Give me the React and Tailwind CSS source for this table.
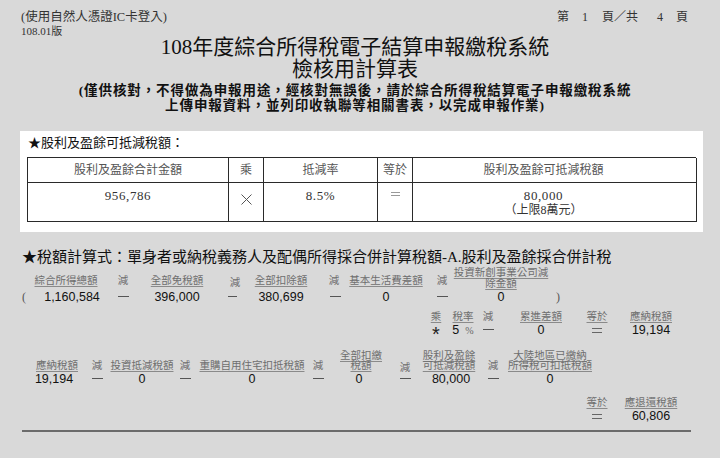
import React from 'react';

const SERIF = "font-['Liberation_Serif','Noto_Sans_CJK_TC',serif]";
const SANS = "font-['Liberation_Sans','Noto_Sans_CJK_TC',sans-serif]";

const Dash = () => <span className="block mt-[7px] h-px w-[11px] bg-[#555]" />;

const Eq = () => (
    <svg width="10" height="5" viewBox="0 0 10 5" className="mt-[6px]">
        <line x1="0" y1="0.5" x2="10" y2="0.5" stroke="#666" strokeWidth="1" />
        <line x1="0" y1="4.5" x2="10" y2="4.5" stroke="#666" strokeWidth="1" />
    </svg>
);

const Paren = ({ children }) => (
    <span className={`${SERIF} text-[12px] text-[#555]`}>{children}</span>
);

const Rate = () => (
    <span className="flex items-baseline">
        <span>5</span>
        <span className={`${SERIF} ml-[6px] text-[10px] text-[#666]`}>%</span>
    </span>
);

const Star = () => (
    <span className={`${SANS} block text-[20px] leading-[16px] mt-[4px] text-[#222]`}>*</span>
);

// one label above one value, both centred in a fixed width box
const Cell = ({ c, l, v, plain, lc = "", vc = "", labelBox, lead }) => {
    const lines = Array.isArray(l) ? l : l ? [l] : [];
    return (
        <div className={`flex flex-col items-center shrink-0 ${c}`}>
            <div className={`flex flex-col justify-end items-center ${labelBox}`}>
                <div className={`${SERIF} text-[10.5px] ${lead} text-[#6e6e6e] whitespace-nowrap text-center ${lc}`}>
                    {lines.map((t, i) => (
                        <div key={i} className={plain ? "" : "underline decoration-[#8a8a8a] underline-offset-[1.5px]"}>{t}</div>
                    ))}
                </div>
            </div>
            <div className={`flex justify-center w-full h-[16px] ${SANS} text-[12.5px] leading-[16px] text-[#111] ${vc}`}>
                {v}
            </div>
        </div>
    );
};

const row1 = [
    { c: "ml-[18px] w-[12px]", v: <Paren>(</Paren> },
    { c: "w-[72px]", l: "綜合所得總額", v: "1,160,584", vc: "pl-[12px]", lc: "mb-[3px]" },
    { c: "ml-[14px] w-[14px]", l: "減", plain: true, v: <Dash />, lc: "mb-[3px]" },
    { c: "ml-[19px] w-[56px]", l: "全部免稅額", v: "396,000", lc: "mb-[3px]" },
    { c: "ml-[23px] w-[14px]", l: "減", plain: true, v: <Dash />, lc: "mb-[1px]", vc: "pr-[5px]" },
    { c: "ml-[11px] w-[56px]", l: "全部扣除額", v: "380,699", lc: "mb-[3px]" },
    { c: "ml-[18px] w-[14px]", l: "減", plain: true, v: <Dash />, lc: "mb-[3px]", vc: "pl-[3px]" },
    { c: "ml-[7px] w-[76px]", l: "基本生活費差額", v: "0", lc: "mb-[3px]" },
    { c: "ml-[11px] w-[14px]", l: "減", plain: true, v: <Dash />, lc: "mb-[3px]" },
    { c: "ml-[3px] w-[98px]", l: ["投資新創事業公司減", "除金額"], v: "0" },
    { c: "ml-[2px] w-[12px]", v: <Paren>)</Paren> },
];

const row2 = [
    { c: "ml-[428px] w-[16px]", l: "乘", v: <Star /> },
    { c: "ml-[8px] w-[22px]", l: "稅率", v: <Rate /> },
    { c: "ml-[6px] w-[16px]", l: "減", plain: true, v: <Dash /> },
    { c: "ml-[20px] w-[50px]", l: "累進差額", v: "0" },
    { c: "ml-[18px] w-[26px]", l: "等於", v: <Eq /> },
    { c: "ml-[14px] w-[54px]", l: "應納稅額", v: "19,194" },
];

const row3 = [
    { c: "ml-[30px] w-[54px]", l: "應納稅額", v: "19,194", vc: "pr-[6px]" },
    { c: "ml-[5px] w-[16px]", l: "減", plain: true, v: <Dash /> },
    { c: "ml-[3px] w-[68px]", l: "投資抵減稅額", v: "0" },
    { c: "ml-[1px] w-[16px]", l: "減", plain: true, v: <Dash /> },
    { c: "ml-[3px] w-[112px]", l: "重購自用住宅扣抵稅額", v: "0" },
    { c: "ml-[2px] w-[16px]", l: "減", plain: true, v: <Dash /> },
    { c: "ml-[8px] w-[54px]", l: ["全部扣繳", "稅額"], v: "0", vc: "pr-[4px]" },
    { c: "ml-[9px] w-[16px]", l: "減", plain: true, v: <Dash />, lc: "-mb-[2px]" },
    { c: "ml-[6px] w-[60px]", l: ["股利及盈餘", "可抵減稅額"], v: "80,000", vc: "pl-[4px]" },
    { c: "ml-[6px] w-[16px]", l: "減", plain: true, v: <Dash /> },
    { c: "ml-[3px] w-[92px]", l: ["大陸地區已繳納", "所得稅可扣抵稅額"], v: "0" },
];

const row4 = [
    { c: "ml-[584px] w-[26px]", l: "等於", v: <Eq /> },
    { c: "ml-[12px] w-[58px]", l: "應退還稅額", v: "60,806" },
];

const Row = ({ cells, labelBox, lead, className = "" }) => (
    <div className={`flex ${className}`}>
        {cells.map((cell, i) => (
            <Cell key={i} {...cell} labelBox={labelBox} lead={lead} />
        ))}
    </div>
);

export default function App() {
    return (
        <div className={`min-h-screen w-[720px] bg-[#d9d9d9] ${SERIF} text-[#222]`}>
            {/* Header */}
            <div className="pt-[9px]">
                <div className="flex justify-between pl-[21px] pr-[32px] h-[16px] leading-[16px]">
                    <span className="text-[12.5px] text-[#333]">(使用自然人憑證IC卡登入)</span>
                    <span className="flex text-[12px] text-[#333]">
                        <span>第</span>
                        <span className="ml-[10px] w-[12px] text-center">1</span>
                        <span className="ml-[11px]">頁／共</span>
                        <span className="ml-[16px] w-[12px] text-center">4</span>
                        <span className="ml-[10px]">頁</span>
                    </span>
                </div>
                <div className="pl-[21px] text-[11px] leading-[13px] text-[#333]">108.01版</div>
                <div className="w-[710px] -mt-[2px] text-center text-[21px] leading-[22px] text-[#111]">
                    <div>108年度綜合所得稅電子結算申報繳稅系統</div>
                    <div>檢核用計算表</div>
                </div>
                <div className="w-[710px] mt-[3px] text-center text-[13.5px] leading-[15px] tracking-[0.9px] font-bold text-[#111]">
                    <div>(僅供核對，不得做為申報用途，經核對無誤後，請於綜合所得稅結算電子申報繳稅系統</div>
                    <div>上傳申報資料，並列印收執聯等相關書表，以完成申報作業)</div>
                </div>
            </div>

            {/* Dividend credit box */}
            <div className="ml-[20px] mt-[18px] w-[683px] bg-white px-[7px] pt-[4px] pb-[10px]">
                <div className="pl-[1px] text-[13px] leading-[16px] text-[#111]">★股利及盈餘可抵減稅額：</div>
                <div className="mt-[6px] grid grid-cols-[201px_35px_114px_35px_284px] border-t border-l border-[#2a2a2a] text-[12px] text-[#555]">
                    <div className="h-[25px] border-r border-b border-[#2a2a2a] flex items-center justify-center">股利及盈餘合計金額</div>
                    <div className="h-[25px] border-r border-b border-[#2a2a2a] flex items-center justify-center">乘</div>
                    <div className="h-[25px] border-r border-b border-[#2a2a2a] flex items-center justify-center">抵減率</div>
                    <div className="h-[25px] border-r border-b border-[#2a2a2a] flex items-center justify-center">等於</div>
                    <div className="h-[25px] border-r border-b border-[#2a2a2a] flex items-center justify-center pr-[22px]">股利及盈餘可抵減稅額</div>

                    <div className="h-[39px] border-r border-b border-[#2a2a2a] pt-[5px] text-center text-[13px] leading-[15px] tracking-[0.6px] text-[#333]">956,786</div>
                    <div className="h-[39px] border-r border-b border-[#2a2a2a] flex justify-center pt-[11px]">
                        <svg width="11" height="11" viewBox="0 0 11 11">
                            <line x1="0.5" y1="0.5" x2="10.5" y2="10.5" stroke="#555" strokeWidth="1" />
                            <line x1="10.5" y1="0.5" x2="0.5" y2="10.5" stroke="#555" strokeWidth="1" />
                        </svg>
                    </div>
                    <div className="h-[39px] border-r border-b border-[#2a2a2a] pt-[5px] text-center text-[13px] leading-[15px] tracking-[0.6px] text-[#333]">8.5%</div>
                    <div className="h-[39px] border-r border-b border-[#2a2a2a] flex justify-center pt-[9px]">
                        <svg width="9" height="4" viewBox="0 0 9 4">
                            <line x1="0" y1="0.5" x2="9" y2="0.5" stroke="#999" strokeWidth="1" />
                            <line x1="0" y1="3.5" x2="9" y2="3.5" stroke="#999" strokeWidth="1" />
                        </svg>
                    </div>
                    <div className="h-[39px] border-r border-b border-[#2a2a2a] pt-[5px] pr-[22px] text-center text-[13px] leading-[15px] text-[#333]">
                        <div className="tracking-[0.6px]">80,000</div>
                        <div className="text-[12px]">（上限8萬元）</div>
                    </div>
                </div>
            </div>

            {/* Tax formula */}
            <div className="mt-[15px] pl-[22px] text-[15px] leading-[20px] text-[#111] whitespace-nowrap">
                ★稅額計算式：單身者或納稅義務人及配偶所得採合併計算稅額-A.股利及盈餘採合併計稅
            </div>
            <Row cells={row1} labelBox="h-[22px]" lead="leading-[11px]" />
            <Row cells={row2} labelBox="h-[11px]" lead="leading-[11px]" className="mt-[6px]" />
            <Row cells={row3} labelBox="h-[21px]" lead="leading-[10px]" className="mt-[12px]" />
            <Row cells={row4} labelBox="h-[11px]" lead="leading-[11px]" className="mt-[10px]" />
            <div className="ml-[22px] mt-[6px] w-[669px] h-[2px] bg-[#6b6b6b]" />
        </div>
    );
}
